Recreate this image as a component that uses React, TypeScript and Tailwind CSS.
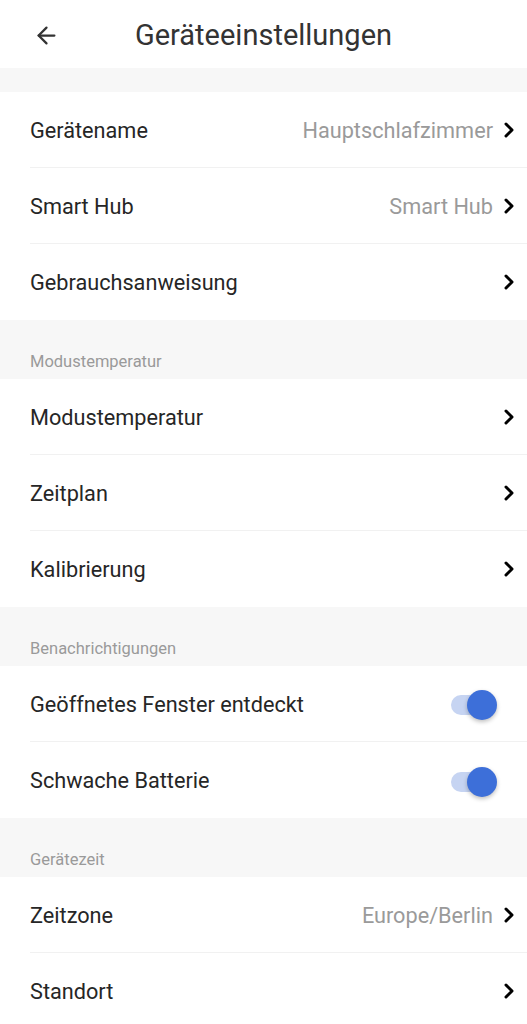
import { ArrowLeft, ChevronRight } from "lucide-react"

type Row = { label: string; value?: string; toggle?: boolean }

const sections: { title?: string; rows: Row[] }[] = [
  {
    rows: [
      { label: "Gerätename", value: "Hauptschlafzimmer" },
      { label: "Smart Hub", value: "Smart Hub" },
      { label: "Gebrauchsanweisung" },
    ],
  },
  {
    title: "Modustemperatur",
    rows: [{ label: "Modustemperatur" }, { label: "Zeitplan" }, { label: "Kalibrierung" }],
  },
  {
    title: "Benachrichtigungen",
    rows: [
      { label: "Geöffnetes Fenster entdeckt", toggle: true },
      { label: "Schwache Batterie", toggle: true },
    ],
  },
  {
    title: "Gerätezeit",
    rows: [{ label: "Zeitzone", value: "Europe/Berlin" }, { label: "Standort" }],
  },
]

function Toggle() {
  return (
    <div className="relative mr-[32px] h-[20px] w-[38px] rounded-full bg-[#c6d4f2]">
      <div className="absolute -top-[5px] right-[-8px] h-[30px] w-[30px] rounded-full bg-[#3d6fd9] shadow-[0_2px_4px_rgba(0,0,0,0.25)]" />
    </div>
  )
}

export default function App() {
  return (
    <div className="min-h-screen bg-[#f7f7f7] font-['Roboto',sans-serif]">
      <header className="relative flex h-[68px] items-center justify-center bg-white pt-[3px]">
        <ArrowLeft className="absolute left-[33px] top-[22px] h-[27px] w-[27px] text-[#333]" strokeWidth={2} />
        <h1 className="text-[29px] text-[#333]">Geräteeinstellungen</h1>
      </header>

      {sections.map((s, i) => (
        <div key={i}>
          {s.title ? (
            <div className="flex h-[59px] items-end px-[30px] pb-[4px] text-[16.5px] text-[#9a9a9a]">{s.title}</div>
          ) : (
            <div className="h-[24px]" />
          )}
          <div className="bg-white">
            {s.rows.map((r, j) => (
              <div key={j} className="pl-[30px]">
                <div
                  className={
                    "flex h-[76px] items-center pr-[6px] pt-[3px] " +
                    (j < s.rows.length - 1 ? "border-b border-[#f1f1f1]" : "")
                  }
                >
                  <span className="flex-1 text-[21.7px] text-[#262626]">{r.label}</span>
                  {r.toggle ? (
                    <Toggle />
                  ) : (
                    <>
                      {r.value && <span className="mr-[4px] text-[21.7px] text-[#9a9a9a]">{r.value}</span>}
                      <ChevronRight className="-mt-[3px] h-[24px] w-[24px] text-black" strokeWidth={3} />
                    </>
                  )}
                </div>
              </div>
            ))}
          </div>
        </div>
      ))}
    </div>
  )
}
